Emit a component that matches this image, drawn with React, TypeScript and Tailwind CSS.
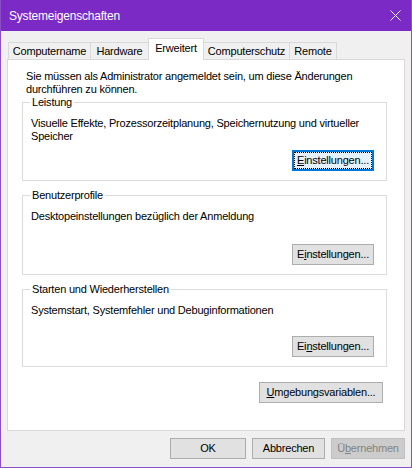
import React from "react";

const font = { fontFamily: '"Liberation Sans", Arial, sans-serif' };

function Btn({
  children,
  w,
  focused = false,
  disabled = false,
}: {
  children: React.ReactNode;
  w: string;
  focused?: boolean;
  disabled?: boolean;
}) {
  return (
    <div
      className={`${w} h-[21px] flex items-center justify-center text-[11px] leading-none tracking-[-0.2px] ${
        focused
          ? "border-2 border-[#0078d7] bg-[#e5f1fb]"
          : disabled
          ? "border border-[#bfbfbf] bg-[#cccccc] text-[#838383]"
          : "border border-[#adadad] bg-[#e1e1e1] text-black"
      }`}
    >
      {focused ? (
        <div className="w-full h-full border border-dotted border-black flex items-center justify-center">
          {children}
        </div>
      ) : (
        children
      )}
    </div>
  );
}

function Group({
  title,
  text,
  children,
  h,
}: {
  title: string;
  text: React.ReactNode;
  children: React.ReactNode;
  h: string;
}) {
  return (
    <div className={`relative ${h} border border-[#dcdcdc] flex flex-col`}>
      <span className="absolute -top-[7px] left-[7px] bg-white px-[2px] text-[11px] leading-[13px] tracking-[-0.2px]">
        {title}
      </span>
      <div className="pl-[8px] pt-[14px] text-[11px] leading-[13px] tracking-[-0.2px] whitespace-nowrap">{text}</div>
      <div className="mt-auto mb-[9px] mr-[12px] flex justify-end">{children}</div>
    </div>
  );
}

export default function App() {
  return (
    <div
      className="w-[412px] h-[468px] bg-[#f0f0f0] border-x border-b border-[#8a4fc7] flex flex-col text-black"
      style={font}
    >
      <div className="h-[31px] bg-[#7b2ac6] flex items-center justify-between pl-[8px] pr-[10px] text-white shrink-0">
        <span className="text-[12px] tracking-[-0.2px]">Systemeigenschaften</span>
        <svg width="11" height="11" viewBox="0 0 11 11">
          <path d="M0.5 0.5 L10.5 10.5 M10.5 0.5 L0.5 10.5" stroke="white" strokeWidth="1" />
        </svg>
      </div>

      <div className="px-[6px] pt-[7px] flex flex-col">
        <div className="flex items-end h-[21px] pl-[1px] text-[11px] leading-none tracking-[-0.2px]">
          <div className="h-[17px] px-[3px] w-[82px] flex items-center justify-center border-t border-l border-[#d9d9d9] bg-[#f0f0f0]">
            Computername
          </div>
          <div className="h-[17px] w-[58px] flex items-center justify-center border-t border-l border-[#d9d9d9] bg-[#f0f0f0]">
            Hardware
          </div>
          <div className="relative z-10 -mb-px h-[22px] w-[56px] flex items-start pt-[4px] justify-center border-t border-x border-[#d9d9d9] bg-white">
            Erweitert
          </div>
          <div className="h-[17px] w-[86px] flex items-center justify-center border-t border-r border-[#d9d9d9] bg-[#f0f0f0]">
            Computerschutz
          </div>
          <div className="h-[17px] w-[47px] flex items-center justify-center border-t border-r border-[#d9d9d9] bg-[#f0f0f0]">
            Remote
          </div>
        </div>

        <div className="h-[372px] bg-white border border-[#d9d9d9] flex flex-col pl-[14px] pr-[17px]">
          <div className="pt-[10px] pl-[4px] text-[11px] leading-[13px] tracking-[-0.2px] whitespace-nowrap">
            Sie müssen als Administrator angemeldet sein, um diese Änderungen
            <br />
            durchführen zu können.
          </div>

          <div className="mt-[6px] flex flex-col gap-[14px]">
            <Group
              h="h-[79px]"
              title="Leistung"
              text={
                <>
                  Visuelle Effekte, Prozessorzeitplanung, Speichernutzung und virtueller
                  <br />
                  Speicher
                </>
              }
            >
              <Btn w="w-[82px]" focused>
                <span>
                  <u>E</u>instellungen...
                </span>
              </Btn>
            </Group>
            <Group h="h-[80px]" title="Benutzerprofile" text="Desktopeinstellungen bezüglich der Anmeldung">
              <Btn w="w-[82px]">
                <span>
                  E<u>i</u>nstellungen...
                </span>
              </Btn>
            </Group>
            <Group h="h-[78px]" title="Starten und Wiederherstellen" text="Systemstart, Systemfehler und Debuginformationen">
              <Btn w="w-[82px]">
                <span>
                  Ei<u>n</u>stellungen...
                </span>
              </Btn>
            </Group>
          </div>

          <div className="mt-[15px] flex justify-end pr-[4px]">
            <Btn w="w-[124px]">
              <span>
                <u>U</u>mgebungsvariablen...
              </span>
            </Btn>
          </div>
        </div>

        <div className="mt-[7px] flex justify-end gap-[6px]">
          <Btn w="w-[76px]">OK</Btn>
          <Btn w="w-[73px]">Abbrechen</Btn>
          <Btn w="w-[74px]" disabled>
            <span>
              Ü<u>b</u>ernehmen
            </span>
          </Btn>
        </div>
      </div>
    </div>
  );
}
